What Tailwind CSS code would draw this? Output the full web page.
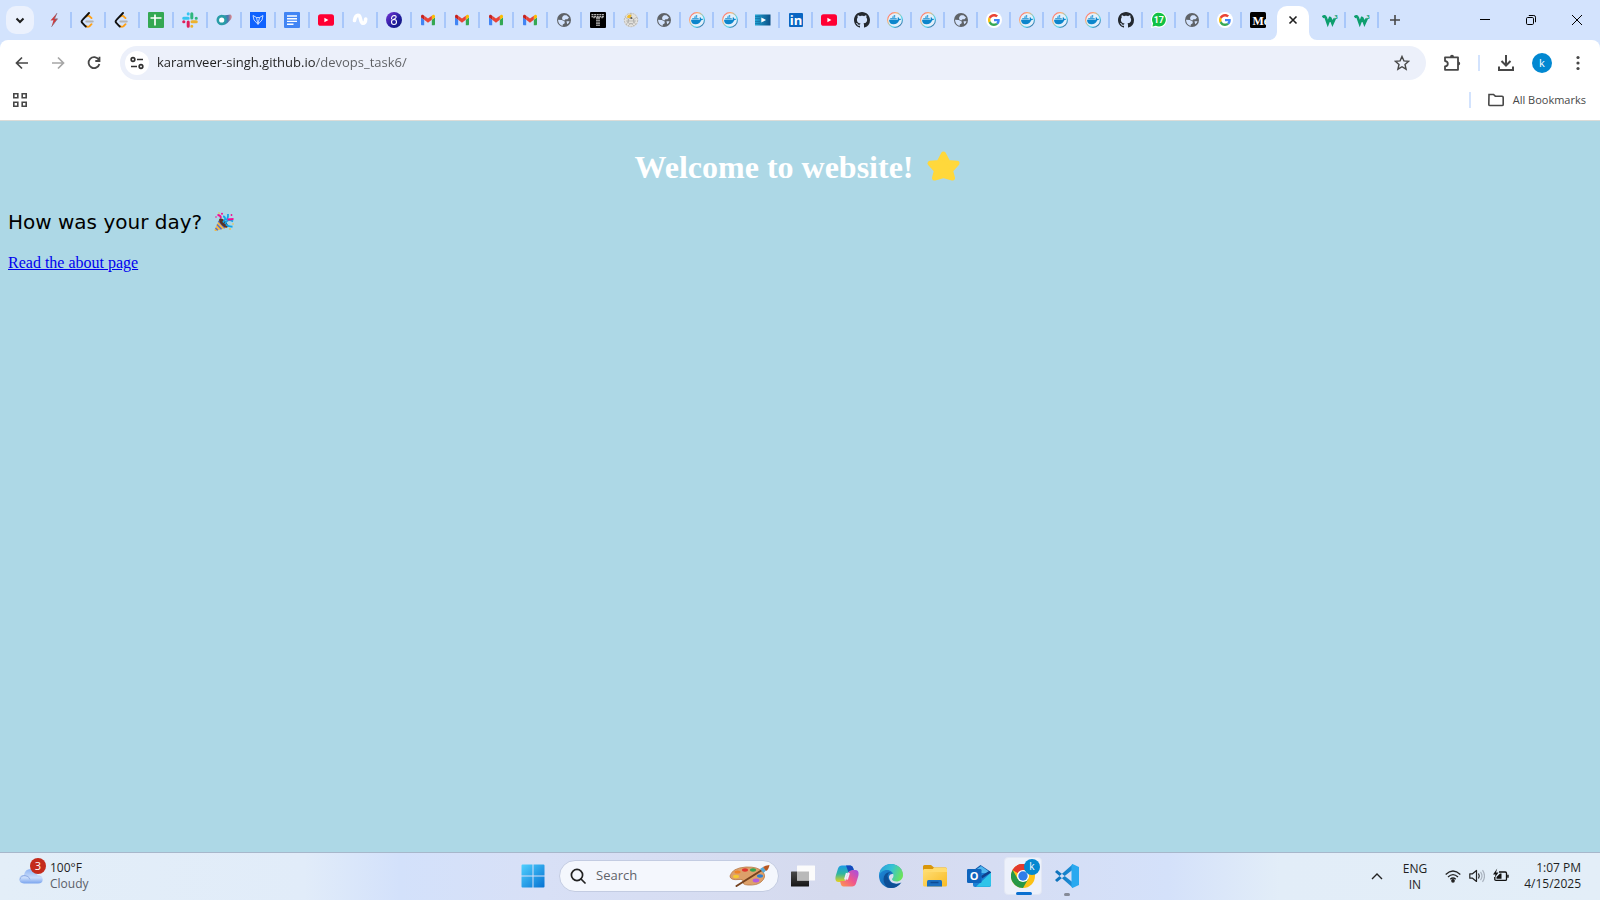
<!DOCTYPE html>
<html lang="en">
<head>
<meta charset="utf-8">
<title>karamveer-singh.github.io/devops_task6/</title>
<script src="https://cdn.jsdelivr.net/npm/@tailwindcss/browser@4"></script>
</head>
<body class="flex min-h-screen flex-col bg-[#add8e6] font-['Open_Sans',sans-serif] text-[#1f1f1f]">

<svg class="absolute size-0" aria-hidden="true">
  <defs>
    <linearGradient id="dockRing" x1="0" y1="0" x2="1" y2="1"><stop offset="0" stop-color="#ff4f6d"/><stop offset=".3" stop-color="#ffb070"/><stop offset=".65" stop-color="#49d9f0"/><stop offset="1" stop-color="#2a3a80"/></linearGradient>
    <linearGradient id="violet" x1="0" y1="0" x2="1" y2="1"><stop offset="0" stop-color="#7a35d8"/><stop offset=".6" stop-color="#1f1c9c"/><stop offset="1" stop-color="#101a78"/></linearGradient>
    <linearGradient id="blob" x1="0" x2="1"><stop offset="0" stop-color="#2ba3a8"/><stop offset=".6" stop-color="#4876b0"/><stop offset="1" stop-color="#f08a8a"/></linearGradient>
    <linearGradient id="prime" x1="0" x2="1"><stop offset="0" stop-color="#22a5d4"/><stop offset="1" stop-color="#0b4f86"/></linearGradient>
    <linearGradient id="win" x1="0" y1="0" x2="1" y2="1"><stop offset="0" stop-color="#4fd0ff"/><stop offset="1" stop-color="#0672d2"/></linearGradient>
    <linearGradient id="cloud" x1="0" y1="0" x2="0" y2="1"><stop offset="0" stop-color="#8fb4f2"/><stop offset=".6" stop-color="#c9dcfb"/><stop offset="1" stop-color="#79a4ee"/></linearGradient>
    <linearGradient id="tvDark" x1="0" y1="0" x2="0" y2="1"><stop offset="0" stop-color="#4a4a4a"/><stop offset="1" stop-color="#151515"/></linearGradient>
    <linearGradient id="cpA" x1="0" y1="0" x2="0" y2="1"><stop offset="0" stop-color="#1b9be8"/><stop offset=".5" stop-color="#2fb6a0"/><stop offset="1" stop-color="#e8d21c"/></linearGradient>
    <linearGradient id="cpB" x1="1" y1="0" x2="0" y2="1"><stop offset="0" stop-color="#a04ee8"/><stop offset=".5" stop-color="#f0568c"/><stop offset="1" stop-color="#ff9a4a"/></linearGradient>
    <linearGradient id="edTop" x1="0" y1=".2" x2="1" y2=".5"><stop offset="0" stop-color="#2a9fdc"/><stop offset=".5" stop-color="#36c3d4"/><stop offset="1" stop-color="#6be35c"/></linearGradient>
    <linearGradient id="edBody" x1="0" y1="0" x2="1" y2="1"><stop offset="0" stop-color="#1f8fe0"/><stop offset="1" stop-color="#10549c"/></linearGradient>
    <linearGradient id="fold" x1="0" y1="0" x2="1" y2="1"><stop offset="0" stop-color="#ffdf78"/><stop offset="1" stop-color="#f9bb23"/></linearGradient>
    <linearGradient id="vs" x1="0" x2="1"><stop offset="0" stop-color="#0b6fb8"/><stop offset="1" stop-color="#1f8fd8"/></linearGradient>
  </defs>
  <symbol id="bolt" viewBox="0 0 16 16"><path d="M11 1 4.500 8.500 7.500 8.200 5.500 14.800 11.500 6.800 8.400 7z" fill="#d0393b"/><path d="M11 1 8.400 7 11.500 6.800 5.500 14.800" fill="none" stroke="#7a6a78" stroke-width=".7"/></symbol>
  <symbol id="leet" viewBox="0 0 16 16"><path d="M6.500 4.500q1.500-1.200 3-.2l2 1.800M6 14q1.700 1.500 3.500.2l2-2" fill="none" stroke="#ffa116" stroke-width="1.900" stroke-linecap="round"/><path d="M9 1 2.500 7.800q-1.700 1.700 0 3.400l3.300 3.400" fill="none" stroke="#111" stroke-width="1.900" stroke-linecap="round"/><path d="M6.300 9.500h6.500" stroke="#b3b3b3" stroke-width="1.900" stroke-linecap="round"/></symbol>
  <symbol id="sheet" viewBox="0 0 16 16"><rect width="16" height="16" rx="1" fill="#34a853"/><path d="M2.500 6h11M7 2.500v11" stroke="#fff" stroke-width="1.700"/></symbol>
  <symbol id="slack" viewBox="0 0 16 16"><g fill="none" stroke-width="3" stroke-linecap="round"><path d="M1.700 6.200h4.500M6.200 1.700v.2" stroke="#36c5f0"/><path d="M9.800 1.700v4.300M14.200 6.200h.1" stroke="#2eb67d"/><path d="M14.300 9.800H10M9.800 14.200v.1" stroke="#ecb22e"/><path d="M6.200 14.300V10M1.700 9.800h.2" stroke="#e01e5a"/></g></symbol>
  <symbol id="rings" viewBox="0 0 16 16"><path d="M6 3q3 .5 8.500-.5 2.500 1.500.3 5Q12 11 8.500 13z" fill="url(#blob)"/><circle cx="5.700" cy="8" r="3.900" fill="#fff" stroke="#2a9da8" stroke-width="2.600"/></symbol>
  <symbol id="fox" viewBox="0 0 16 16"><rect width="16" height="16" fill="#0f62fe"/><path d="M3 3.500 6.500 5.500h3L13 3.500 12 8 8 12.300 4 8zM6.500 5.500 8 12.300 9.500 5.500" fill="none" stroke="#d8e6ff" stroke-width=".9"/></symbol>
  <symbol id="doc" viewBox="0 0 16 16"><rect width="16" height="16" rx="1" fill="#4285f4"/><path d="M3 4h10M3 6.700h10M3 9.400h10M3 12.200h6.500" stroke="#fff" stroke-width="1.400"/></symbol>
  <symbol id="yt" viewBox="0 0 16 16"><rect y="2.300" width="16" height="11.500" rx="2.600" fill="#ff0033"/><path d="M6.400 5.800v4.500L10.400 8z" fill="#fff"/></symbol>
  <symbol id="wave" viewBox="0 0 16 16"><path d="M2.500 8.500Q3.500 2.500 6.800 3.500C9 4.300 8 11 11 11.300q2.500 0 2.700-4.300" fill="none" stroke="#fff" stroke-width="3.600" stroke-linecap="round"/></symbol>
  <symbol id="eight" viewBox="0 0 16 16"><circle cx="8" cy="8" r="8" fill="url(#violet)"/><g fill="none" stroke="#fff" stroke-width="1.100"><circle cx="8" cy="10" r="2.500"/><path d="M5.500 7.300q0-3.800 3-3.800 2 .3 1.500 2-.5 1-3 2.300"/></g></symbol>
  <symbol id="gmail" viewBox="52 42 88 66"><path fill="#4285f4" d="M58 108h14V74L52 59v43c0 3.320 2.690 6 6 6"/><path fill="#34a853" d="M120 108h14c3.320 0 6-2.690 6-6V59l-20 15"/><path fill="#fbbc04" d="M120 48v26l20-15v-8c0-7.420-8.470-11.650-14.400-7.200"/><path fill="#ea4335" d="M72 74V48l24 18 24-18v26L96 92"/><path fill="#c5221f" d="M52 51v8l20 15V48l-5.600-4.200c-5.940-4.450-14.400-.22-14.400 7.200"/></symbol>
  <symbol id="globe" viewBox="0 0 16 16"><circle cx="8" cy="8" r="7" fill="#5f6368"/><path d="M6.800 4.200 8 3.200h2.500L13 5.500l-1.500 1.800H9.500L8.300 8.500 6.500 7.800 6 6zM2 7.800l3.800.1 2.900 1.600v1.800l-1.900 1.200L6.500 14Q2.300 12.500 2 7.800M10.500 9.300h3q-.5 2-2.300 3z" fill="#d3e3fd"/></symbol>
  <symbol id="tt" viewBox="0 0 16 16"><rect width="16" height="16" rx="1" fill="#000"/><path d="M1.500 2.800h13M1.500 4.800h13M4 6.300v-1M12 6.300v-1" stroke="#eee" stroke-width="1.100" stroke-dasharray="2 .6"/><path d="M7 5v9M9 5v9" stroke="#eee" stroke-width="1.200" stroke-dasharray="2 .6"/></symbol>
  <symbol id="ball" viewBox="0 0 16 16"><circle cx="8" cy="8" r="7.300" fill="#e3e1dc"/><g fill="none" stroke="#a5a5a3" stroke-width=".6"><circle cx="8" cy="8" r="6.700" stroke-dasharray="2 1"/><circle cx="8" cy="9" r="3"/><path d="m2 5 4 3-3 5M14 5l-4 3 3 5M5 14l3-3 3 3M8 1v6M3 9h10"/></g><path d="M4 4.500Q6 1.500 8.500 3l-1 3L4.500 6z" fill="#f3bd2a"/><circle cx="8.300" cy="6" r="1" fill="#555"/></symbol>
  <symbol id="docker" viewBox="0 0 16 16"><circle cx="8" cy="8" r="7.400" fill="#e3f0fc" stroke="url(#dockRing)" stroke-width="1.100"/><path d="M2 7.700h8.700q.3-.8-.2-1.900l.8-.6q1 .7 1 1.700 1.100-.2 1.900.2-.6 1.200-2 1.200Q10.700 12.200 6.500 12.200 2.200 12.200 2 7.700" fill="#0c86cc"/><path d="M3.200 5.900h6.500v1.500H3.200zM5 4.500h3.200v1.300H5zM6.700 3.100h1.500v1.300H6.700z" fill="#46a6dc"/></symbol>
  <symbol id="primevid" viewBox="0 0 16 16"><rect y="2.500" width="15.500" height="11" fill="url(#prime)"/><path d="M0 4.500h5M0 6.500h5M0 9.500h5M0 11.500h5" stroke="#126a9d" stroke-width=".6"/><path d="M6.300 5.500v5L11 8z" fill="#fff"/></symbol>
  <symbol id="linkedin" viewBox="0 0 16 16"><rect x="1" y="1" width="14" height="14" rx="1" fill="#0a66c2"/><text x="8" y="13" text-anchor="middle" font-family="Open Sans" font-weight="700" font-size="13" fill="#fff">in</text></symbol>
  <symbol id="github" viewBox="0 0 16 16"><path fill="#24292f" d="M8 0C3.580 0 0 3.580 0 8c0 3.540 2.290 6.530 5.470 7.590.4.070.55-.17.55-.38 0-.19-.01-.82-.01-1.490-2.010.37-2.530-.49-2.690-.94-.09-.23-.48-.94-.82-1.130-.28-.15-.68-.52-.01-.53.63-.01 1.080.58 1.230.82.72 1.210 1.870.87 2.330.66.07-.52.28-.87.51-1.070-1.780-.2-3.640-.89-3.640-3.950 0-.87.31-1.590.82-2.150-.08-.2-.36-1.020.08-2.120 0 0 .67-.21 2.200.82.64-.18 1.320-.27 2-.27s1.360.09 2 .27c1.530-1.040 2.200-.82 2.200-.82.44 1.100.16 1.920.08 2.120.51.56.82 1.270.82 2.150 0 3.070-1.870 3.750-3.650 3.950.29.25.54.73.54 1.480 0 1.070-.01 1.930-.01 2.200 0 .21.15.46.55.38A8.010 8.010 0 0 0 16 8c0-4.420-3.580-8-8-8"/></symbol>
  <symbol id="google" viewBox="0 0 16 16"><circle cx="8" cy="8" r="8" fill="#fff"/><g transform="translate(2 2) scale(.25)"><path fill="#EA4335" d="M24 9.500c3.540 0 6.710 1.220 9.210 3.600l6.850-6.850C35.900 2.380 30.470 0 24 0 14.620 0 6.510 5.380 2.560 13.220l7.980 6.190C12.430 13.720 17.740 9.500 24 9.500z"/><path fill="#4285F4" d="M46.980 24.550c0-1.570-.15-3.090-.38-4.550H24v9.020h12.940c-.58 2.960-2.260 5.480-4.780 7.180l7.730 6c4.510-4.180 7.090-10.360 7.090-17.650z"/><path fill="#FBBC05" d="M10.530 28.590c-.48-1.450-.76-2.990-.76-4.590s.27-3.140.76-4.590l-7.980-6.190C.92 16.460 0 20.120 0 24s.92 7.540 2.560 10.780l7.970-6.190z"/><path fill="#34A853" d="M24 48c6.480 0 11.930-2.130 15.890-5.810l-7.730-6c-2.150 1.450-4.920 2.300-8.160 2.300-6.260 0-11.570-4.220-13.470-9.910l-7.980 6.190C6.510 42.620 14.620 48 24 48z"/></g></symbol>
  <symbol id="whats" viewBox="0 0 16 16"><path d="M0 16 .8 11.500A8 8 0 1 1 4.500 15z" fill="#fff"/><path d="M1.500 14.500l.6-3.200A6.900 6.900 0 1 1 4.900 13.800z" fill="#12c143"/><text x="7.800" y="11.200" text-anchor="middle" font-family="Roboto" font-weight="700" font-size="9" fill="#fff">17</text></symbol>
  <symbol id="medium" viewBox="0 0 16 16"><rect width="16" height="16" rx="1.500" fill="#000"/><text x="2.500" y="12.500" font-family="Liberation Serif" font-weight="700" font-size="12" fill="#fff">Me</text></symbol>
  <symbol id="w3" viewBox="0 0 16 16"><path d="M.5 5.200Q3 3.300 3.800 5.800L5.800 11.500 8 5.800Q8.500 5.800 9 7.500L10.500 11.500 12.800 6.500" fill="none" stroke="#0d9e6e" stroke-width="2.600"/><text x="12.300" y="6.500" font-family="Roboto" font-weight="700" font-size="6" fill="#0d9e6e">3</text></symbol>
</svg>

<header class="bg-[#d3e3fd]">
  <div class="flex h-10 items-center">
    <button aria-label="Search tabs" class="ml-1.5 mr-1 flex size-7 items-center justify-center rounded-[10px] bg-[#ebf1fd]"><svg class="size-4" viewBox="0 0 16 16" fill="none" stroke="#1f1f1f" stroke-width="2"><path d="m4.500 6.500 3.500 3.500 3.500-3.500"/></svg></button>
    <nav aria-label="Tabs" class="flex h-4 items-center *:flex *:h-4 *:shrink-0 *:items-center *:justify-center [&_svg]:size-4">
      <button aria-label="Tab" class="w-[34px] border-r-2 border-[#a8c7fa]"><svg><use href="#bolt"/></svg></button>
      <button aria-label="LeetCode" class="w-[34px] border-r-2 border-[#a8c7fa]"><svg><use href="#leet"/></svg></button>
      <button aria-label="LeetCode" class="w-[34px] border-r-2 border-[#a8c7fa]"><svg><use href="#leet"/></svg></button>
      <button aria-label="Sheets" class="w-[34px] border-r-2 border-[#a8c7fa]"><svg><use href="#sheet"/></svg></button>
      <button aria-label="Slack" class="w-[34px] border-r-2 border-[#a8c7fa]"><svg><use href="#slack"/></svg></button>
      <button aria-label="Tab" class="w-[34px] border-r-2 border-[#a8c7fa]"><svg><use href="#rings"/></svg></button>
      <button aria-label="Tab" class="w-[34px] border-r-2 border-[#a8c7fa]"><svg><use href="#fox"/></svg></button>
      <button aria-label="Docs" class="w-[34px] border-r-2 border-[#a8c7fa]"><svg><use href="#doc"/></svg></button>
      <button aria-label="YouTube" class="w-[34px] border-r-2 border-[#a8c7fa]"><svg><use href="#yt"/></svg></button>
      <button aria-label="Tab" class="w-[34px] border-r-2 border-[#a8c7fa]"><svg><use href="#wave"/></svg></button>
      <button aria-label="Tab" class="w-[34px] border-r-2 border-[#a8c7fa]"><svg><use href="#eight"/></svg></button>
      <button aria-label="Gmail" class="w-[34px] border-r-2 border-[#a8c7fa]"><svg class="p-px"><use href="#gmail"/></svg></button>
      <button aria-label="Gmail" class="w-[34px] border-r-2 border-[#a8c7fa]"><svg class="p-px"><use href="#gmail"/></svg></button>
      <button aria-label="Gmail" class="w-[34px] border-r-2 border-[#a8c7fa]"><svg class="p-px"><use href="#gmail"/></svg></button>
      <button aria-label="Gmail" class="w-[34px] border-r-2 border-[#a8c7fa]"><svg class="p-px"><use href="#gmail"/></svg></button>
      <button aria-label="Tab" class="w-[34px] border-r-2 border-[#a8c7fa]"><svg><use href="#globe"/></svg></button>
      <button aria-label="Tab" class="w-[33px] border-r-2 border-[#a8c7fa]"><svg><use href="#tt"/></svg></button>
      <button aria-label="Tab" class="w-[33px] border-r-2 border-[#a8c7fa]"><svg><use href="#ball"/></svg></button>
      <button aria-label="Tab" class="w-[33px] border-r-2 border-[#a8c7fa]"><svg><use href="#globe"/></svg></button>
      <button aria-label="Docker" class="w-[33px] border-r-2 border-[#a8c7fa]"><svg><use href="#docker"/></svg></button>
      <button aria-label="Docker" class="w-[33px] border-r-2 border-[#a8c7fa]"><svg><use href="#docker"/></svg></button>
      <button aria-label="Video" class="w-[33px] border-r-2 border-[#a8c7fa]"><svg><use href="#primevid"/></svg></button>
      <button aria-label="LinkedIn" class="w-[33px] border-r-2 border-[#a8c7fa]"><svg><use href="#linkedin"/></svg></button>
      <button aria-label="YouTube" class="w-[33px] border-r-2 border-[#a8c7fa]"><svg><use href="#yt"/></svg></button>
      <button aria-label="GitHub" class="w-[33px] border-r-2 border-[#a8c7fa]"><svg><use href="#github"/></svg></button>
      <button aria-label="Docker" class="w-[33px] border-r-2 border-[#a8c7fa]"><svg><use href="#docker"/></svg></button>
      <button aria-label="Docker" class="w-[33px] border-r-2 border-[#a8c7fa]"><svg><use href="#docker"/></svg></button>
      <button aria-label="Tab" class="w-[33px] border-r-2 border-[#a8c7fa]"><svg><use href="#globe"/></svg></button>
      <button aria-label="Google" class="w-[33px] border-r-2 border-[#a8c7fa]"><svg><use href="#google"/></svg></button>
      <button aria-label="Docker" class="w-[33px] border-r-2 border-[#a8c7fa]"><svg><use href="#docker"/></svg></button>
      <button aria-label="Docker" class="w-[33px] border-r-2 border-[#a8c7fa]"><svg><use href="#docker"/></svg></button>
      <button aria-label="Docker" class="w-[33px] border-r-2 border-[#a8c7fa]"><svg><use href="#docker"/></svg></button>
      <button aria-label="GitHub" class="w-[33px] border-r-2 border-[#a8c7fa]"><svg><use href="#github"/></svg></button>
      <button aria-label="WhatsApp" class="w-[33px] border-r-2 border-[#a8c7fa]"><svg><use href="#whats"/></svg></button>
      <button aria-label="Tab" class="w-[33px] border-r-2 border-[#a8c7fa]"><svg><use href="#globe"/></svg></button>
      <button aria-label="Google" class="w-[33px] border-r-2 border-[#a8c7fa]"><svg><use href="#google"/></svg></button>
      <button aria-label="Tab" class="w-[31px]"><svg><use href="#medium"/></svg></button>
    </nav>
    <div class="-ml-1 flex h-[34px] shrink-0 items-end self-end">
      <svg class="size-2" viewBox="0 0 8 8"><path d="M8 0v8H0a8 8 0 0 0 8-8" fill="#fff"/></svg>
      <button aria-label="Close tab" class="flex h-[34px] w-8 items-center justify-center rounded-t-[10px] bg-white pb-1.5"><svg class="size-4" viewBox="0 0 16 16" stroke="#1f1f1f" stroke-width="1.600"><path d="m4.500 4.500 7 7m0-7-7 7"/></svg></button>
      <svg class="size-2" viewBox="0 0 8 8"><path d="M0 0v8h8a8 8 0 0 1-8-8" fill="#fff"/></svg>
    </div>
    <div class="flex h-4 shrink-0 items-center *:flex *:h-4 *:items-center *:justify-center [&_svg]:size-4">
      <button aria-label="W3Schools" class="w-[29px] border-r-2 border-[#a8c7fa] pr-0.5"><svg><use href="#w3"/></svg></button>
      <button aria-label="W3Schools" class="w-[33px] border-r-2 border-[#a8c7fa]"><svg><use href="#w3"/></svg></button>
      <button aria-label="New tab" class="w-8"><svg viewBox="0 0 16 16" stroke="#474747" stroke-width="1.600"><path d="M8 3v10M3 8h10"/></svg></button>
    </div>
    <div class="ml-auto flex shrink-0 [&_svg]:size-3 *:flex *:h-10 *:w-[46px] *:items-center *:justify-center">
      <button aria-label="Minimize"><svg viewBox="0 0 12 12" stroke="#000"><path d="M1 5.500h10"/></svg></button>
      <button aria-label="Restore"><svg viewBox="0 0 12 12" fill="none" stroke="#000"><rect x="1.500" y="3.500" width="7" height="7" rx="1.200"/><path d="M3.800 1.500h5q1.700 0 1.700 1.700v5"/></svg></button>
      <button aria-label="Close"><svg viewBox="0 0 12 12" stroke="#000"><path d="m1 1 10 10M11 1 1 11"/></svg></button>
    </div>
  </div>

  <div class="rounded-t-lg border-b border-[#dcdcd8] bg-white">
    <div class="flex h-[46px] items-center pl-1 pr-1">
      <button aria-label="Back" class="flex size-9 items-center justify-center"><svg class="size-4" viewBox="0 0 16 16" fill="none" stroke="#474747" stroke-width="1.700"><path d="M14 8H3M8 2.500 2.500 8 8 13.500"/></svg></button>
      <button aria-label="Forward" class="flex size-9 items-center justify-center"><svg class="size-4" viewBox="0 0 16 16" fill="none" stroke="#a6a6a6" stroke-width="1.700"><path d="M2 8h11M8 2.500 13.500 8 8 13.500"/></svg></button>
      <button aria-label="Reload" class="flex size-9 items-center justify-center"><svg class="size-4" viewBox="0 0 16 16" fill="none" stroke="#474747" stroke-width="1.800"><path d="M12.800 4.800A5.500 5.500 0 1 0 13.400 9M13.500 1.800V6H9.300"/></svg></button>
      <div class="ml-2 mr-2 flex h-[34px] flex-1 items-center rounded-full bg-[#ecf0fa] px-[5px]">
        <button aria-label="Site information" class="mr-2 flex size-6 items-center justify-center rounded-full bg-white"><svg class="size-4" viewBox="0 0 16 16" fill="none" stroke="#303030" stroke-width="1.700"><circle cx="4" cy="4.500" r="1.800"/><path d="M8 4.500h6M2 11.500h6"/><circle cx="12" cy="11.500" r="1.800"/></svg></button>
        <input aria-label="Address" value="karamveer-singh.github.io/devops_task6/" class="min-w-0 flex-1 bg-[linear-gradient(90deg,#1f1f1f_158px,#5c5e62_158px)] bg-clip-text text-[13px] text-transparent outline-none">
        <button aria-label="Bookmark this tab" class="mr-[7px] flex size-6 items-center justify-center"><svg class="size-4" viewBox="0 0 16 16" fill="none" stroke="#474747" stroke-width="1.400"><path d="m8 1.500 1.900 4.400 4.800.4-3.700 3.200 1.100 4.700L8 11.700l-4.100 2.500L5 9.500 1.300 6.300l4.800-.4z"/></svg></button>
      </div>
      <button aria-label="Extensions" class="flex size-9 items-center justify-center"><svg class="size-5" viewBox="0 0 20 20" fill="none" stroke="#474747" stroke-width="1.800"><path d="M3 4.300h13v12.500H3v-3.500q2.800-.3 2.800-2.600T3 8z" stroke-linejoin="round"/><path d="M8 4q0-2.200 2-2.200T12 4M16 8.500q2.200 0 2.200 2t-2.200 2" fill="#474747" stroke="none"/></svg></button>
      <span class="mx-2 h-4 w-0.5 bg-[#d3e3fd]"></span>
      <button aria-label="Downloads" class="flex size-9 items-center justify-center"><svg class="size-[18px]" viewBox="0 0 18 18" fill="none" stroke="#474747" stroke-width="2"><path d="M9 1v10M4.500 7 9 11.500 13.500 7M2 12.500V16h14v-3.500"/></svg></button>
      <button aria-label="Profile" class="flex size-9 items-center justify-center"><span class="flex size-5 items-center justify-center rounded-full bg-[#0288d1] text-[11px] text-white">k</span></button>
      <button aria-label="Menu" class="flex size-9 items-center justify-center"><svg class="size-4" viewBox="0 0 16 16" fill="#474747"><circle cx="8" cy="2.500" r="1.600"/><circle cx="8" cy="8" r="1.600"/><circle cx="8" cy="13.500" r="1.600"/></svg></button>
    </div>
    <div class="flex h-[34px] items-center justify-between pb-1.5 pl-3 pr-[14px]">
      <button aria-label="Apps"><svg class="size-4" viewBox="0 0 16 16" fill="none" stroke="#474747" stroke-width="1.600"><path d="M1.800 1.800h4v4h-4zM10.200 1.800h4v4h-4zM1.800 10.200h4v4h-4zM10.200 10.200h4v4h-4z"/></svg></button>
      <div class="flex items-center"><span class="mr-4 h-4 w-0.5 bg-[#d3e3fd]"></span>
        <button class="flex items-center gap-2 text-[11px] text-[#474747]"><svg class="h-4 w-[18px]" viewBox="0 0 18 16" fill="none" stroke="#474747" stroke-width="1.600"><path d="M2 2.500h4.500l1.800 1.700H15q1.200 0 1.200 1.200v7q0 1.100-1.200 1.100H3q-1.200 0-1.200-1.100z"/></svg>All Bookmarks</button></div>
    </div>
  </div>
</header>

<main class="flex-1 px-2 pt-[26px] text-black">
  <h1 class="flex items-center justify-center gap-2 font-['Liberation_Serif',serif] text-[32px] font-bold leading-10 text-white">Welcome to website!
    <svg role="img" aria-label="star" class="h-10 w-11" viewBox="0 0 44 40"><path d="M21.500 7 26 15.500 35 16.300 28.500 23.500 30.500 31 21.500 28.500 12.500 31 14.500 23.500 8 16.300 17 15.500z" fill="#ffd83b" stroke="#ffd83b" stroke-width="5" stroke-linejoin="round"/></svg>
  </h1>
  <p class="mt-[21px] flex items-center gap-[11px] font-['DejaVu_Sans',sans-serif] text-xl leading-7">How was your day?
    <svg role="img" aria-label="party popper" class="h-5 w-6" viewBox="0 0 24 20"><path d="m6.500 7 8 8.500L2.500 19q-1.300.2-1-1.200z" fill="#f5b942"/><path d="m5.300 9 6.500 7M4 12.500 8.500 17.300M2.500 16l2.300 2.300" stroke="#4f6fd8" stroke-width="1.400"/><ellipse cx="10.500" cy="11" rx="2.700" ry="5.800" transform="rotate(-43 10.500 11)" fill="#5a3326"/><path d="m10 10.500 2-3q.5-3-2-3M11.500 7.500q4 1 3.500-5.500M12 12q3-6.500 8-2.500M13 12.500q3 2.500 6.500 2" fill="none" stroke="#10a5ea" stroke-width="1.800"/><path d="M14.500 7.500q3.500-.5 6-.5M4.500 3q3 0 3.500 3" fill="none" stroke="#f50a93" stroke-width="1.800"/><g fill="#f50a93"><circle cx="9" cy="1.800" r="1"/><circle cx="3" cy="5" r=".8"/><circle cx="18.500" cy="3" r=".9"/></g><g fill="#f8c13a"><circle cx="6" cy="1" r=".8"/><circle cx="17" cy="17" r=".9"/><circle cx="20" cy="12" r=".8"/></g></svg>
  </p>
  <div class="mt-[15px] font-['Liberation_Serif',serif] text-base leading-6"><a href="#about" class="text-[#0000ee] underline">Read the about page</a></div>
</main>

<footer class="grid h-12 grid-cols-[1fr_auto_1fr] border-t border-[#a7b7cb] bg-[linear-gradient(90deg,#e3eef8_0%,#e1ecf9_19%,#d3e1fb_25%,#d8e0f6_34%,#d5daee_52%,#d6ddf3_62%,#d4e1fa_73%,#e2edf8_80%,#e3eef8_100%)] pb-0.5">
  <button class="relative flex items-center gap-[7px] justify-self-start pl-[19px] text-left text-xs leading-4">
    <svg class="h-4 w-6" viewBox="0 0 24 16"><path d="M5 15.500Q.3 15.200.3 11T5 7Q6 1 11.500 1T18.500 7.200q5.200 0 5.200 4.300 0 4-4.700 4z" fill="url(#cloud)"/><path d="M1 11.500Q2 7.200 6 7.500t5 4" fill="none" stroke="#7e9edc" stroke-width=".7"/></svg>
    <span class="absolute left-[30px] top-[5px] flex size-4 items-center justify-center rounded-full bg-[#c42b1c] text-[11px] text-white">3</span>
    <span><span class="block">100°F</span><span class="block text-[#5b6068]">Cloudy</span></span>
  </button>
  <div class="flex items-center">
    <button aria-label="Start" class="flex h-10 w-11 items-center justify-center"><svg class="size-6" viewBox="0 0 24 24" fill="url(#win)"><path d="M1.500.5H11.500V11.500H.5V1.500q0-1 1-1M12.500.5h10q1 0 1 1v10h-11zM.5 12.500h11v11h-10q-1 0-1-1zM12.500 12.500h11v10q0 1-1 1h-10z"/></svg></button>
    <label class="ml-1 mr-0.5 flex h-8 w-[220px] items-center rounded-full border border-[#c3cce2] bg-[#f4f7fd] pl-2.5 pr-2">
      <svg class="size-4" viewBox="0 0 16 16" fill="none" stroke="#222" stroke-width="1.700"><circle cx="7" cy="7" r="5.600"/><path d="m11 11 4 4" stroke-linecap="round"/></svg>
      <input aria-label="Search" placeholder="Search" class="ml-2.5 min-w-0 flex-1 text-[13px] outline-none placeholder:text-[#5f6369]">
      <svg class="h-[22px] w-[41px]" viewBox="0 0 41 22"><path d="M1 11Q3 3 17 2q12-.5 17 5 4 5-2 10-4 3.500-13 3-6-.3-5-3.500.3-2.500-4-2-9 1-9-3.500" fill="#dda06a" stroke="#b97a45" stroke-width=".8"/><ellipse cx="7" cy="11.500" rx="3" ry="1.700" fill="#f6c931"/><ellipse cx="8.500" cy="7" rx="3" ry="1.500" fill="#f08326"/><ellipse cx="16" cy="5" rx="3" ry="1.700" fill="#e0352f"/><ellipse cx="24" cy="5" rx="3" ry="1.700" fill="#31a552"/><ellipse cx="31" cy="11" rx="3" ry="1.700" fill="#2d7fd2"/><ellipse cx="27" cy="15.500" rx="3.300" ry="1.900" fill="#b35be0"/><path d="M7.500 21 33 5" stroke="#75421f" stroke-width="2" stroke-linecap="round"/><path d="m31 4 3.500 4L37 5.500 34 2z" fill="#58abd8"/><path d="M34 2q2-1.500 6.500-2-1 5-3.500 6z" fill="#b85822"/></svg>
    </label>
    <button aria-label="Task view" class="flex h-10 w-11 items-center justify-center"><svg class="size-6" viewBox="0 0 24 24"><rect y="7.500" width="18" height="15" rx=".6" fill="url(#tvDark)"/><rect x="6" y="1.500" width="18" height="15" rx=".6" fill="#fbfbfb"/><path d="M6 7.500h12v9H6z" fill="#b9b9b9"/></svg></button>
    <button aria-label="Copilot" class="flex h-10 w-11 items-center justify-center"><svg class="size-6" viewBox="0 0 24 24"><path d="M7 1.500h8.500q2 0 2.700 2.500l.8 3h-4q-2 0-2.500 2l-2 6.500Q9.500 18 7 18H3.500Q-.5 18 .7 12L3 4.500Q4 1.500 7 1.500" fill="url(#cpA)"/><path d="M17 22.500H8.500q-2 0-2.700-2.500L5 17h4q2 0 2.500-2l2-6.500Q14.500 6 17 6h3.500q4 0 2.800 6L21 19.500q-1 3-4 3" fill="url(#cpB)"/><path d="M11 1.500h4.500q2 0 2.700 2.500l.6 2H17q-2.500 0-3.500 2.500-1-3-2.500-7" fill="#1649bd"/><path d="m11.800 9-1.900 6.500M14 9l-2 6.500" stroke="#f2edf8" stroke-width="1.800"/></svg></button>
    <button aria-label="Edge" class="flex h-10 w-11 items-center justify-center"><svg class="size-6" viewBox="0 0 24 24"><circle cx="12" cy="12" r="12" fill="url(#edBody)"/><path d="M14 9.800q-4.500.5-4 4.200 1 5.500 7.500 5.800 3.500 0 5.500-1.800l1.500-3-1.500-9z" fill="#d8def0"/><path d="M0 11.500C.5 4.500 6 0 12 0c7 0 12 5 12 11 0 4-3 6.500-6.500 6.500-3 0-4.500-1.200-4.500-2.300 0-.8 1.500-1.300 1.500-3.700C14.500 8.500 11.500 6 8 6 4 6 1 8.500 0 11.500" fill="url(#edTop)"/><path d="M8.500 12q0-2.500 3-3.700Q7 8 5 12.500q-2 6 3.500 11L12 24q6 0 9.800-5-2.500 1.200-5.300 1Q9.500 19.500 8.500 12" fill="#0d4f96"/></svg></button>
    <button aria-label="File Explorer" class="flex h-10 w-11 items-center justify-center"><svg class="size-6" viewBox="0 0 24 24"><path d="M0 2.500Q0 1 1.500 1H8l3 2.500h11.500Q24 3.500 24 5v6H0z" fill="#d9960a"/><rect y="5" width="24" height="17.500" rx="1.500" fill="url(#fold)"/><path d="M0 6.500h8.500L11 3.500h11.500q1.500 0 1.500 1.500v3H0z" fill="#ffdc6e"/><path d="M4 22.500v-5Q4 16 5.500 16h12q1.500 0 1.500 1.500v5z" fill="#1a6fc0"/><path d="M7.500 18.500h8" stroke="#0c4b94" stroke-width="1.500"/></svg></button>
    <button aria-label="Outlook" class="flex h-10 w-11 items-center justify-center"><svg class="size-6" viewBox="0 0 24 24"><path d="M5 7.500 13.500 1 24 8v8H5z" fill="#0c55a8"/><path d="M7 7 14 2l8 5.500-8 6z" fill="#51b7f0"/><path d="M6 9h18v12q0 2-2 2H8q-2 0-2-2z" fill="#1a80d5"/><path d="M24 8.500 9 22.800h13q2 0 2-2z" fill="#2ec4e9"/><path d="m14 12 8-5 2 1.500-9 6z" fill="#103f8c"/><rect y="5" width="14.500" height="14" rx="1.300" fill="#0f64bd"/><text x="7.200" y="16" text-anchor="middle" font-family="Open Sans" font-weight="700" font-size="11" fill="#fff">O</text></svg></button>
    <button aria-label="Chrome" class="relative mx-[3px] flex h-[38px] w-[38px] items-center justify-center rounded border border-[#e2e7f4] bg-[#edf1fb]">
      <svg class="size-6" viewBox="0 0 24 24"><circle cx="12" cy="12" r="12" fill="#fbc116"/><path d="M12 12 1.600 6A12 12 0 0 1 22.400 6H12z" fill="#e33b2e"/><path d="M1.600 6A12 12 0 0 0 12 24l5.200-9L12 12 6.800 15z" fill="#279847"/><path d="M1.600 6 7 9l5-3V0A12 12 0 0 0 1.600 6" fill="#e33b2e"/><circle cx="12" cy="12" r="6" fill="#fff"/><circle cx="12" cy="12" r="4.700" fill="#2f7de9"/></svg>
      <span class="absolute right-px top-px flex size-4 items-center justify-center rounded-full bg-[#0288d1] text-[10px] text-white">k</span>
      <span class="absolute -bottom-px left-[11px] h-[3px] w-4 rounded-full bg-[#0a6fd0]"></span>
    </button>
    <button aria-label="Visual Studio Code" class="relative flex h-10 w-11 items-center justify-center"><svg class="size-6" viewBox="0 0 24 24"><path d="m0 8 2-2 16 12.500V24zM0 16l2 2L18 5.500V0z" fill="url(#vs)"/><path d="M17.500 0 24 3v18l-6.500 3-1-1V1z" fill="#29a9f0"/></svg><span class="absolute bottom-0 left-[19px] h-[3px] w-1.5 rounded-full bg-[#868b98]"></span></button>
  </div>
  <div class="flex items-center justify-self-end pr-[19px] text-xs leading-4">
    <button aria-label="Show hidden icons" class="mr-5"><svg class="h-4 w-3" viewBox="0 0 12 16" fill="none" stroke="#222" stroke-width="1.400"><path d="m1 11 5-5 5 5"/></svg></button>
    <button class="mr-[18px] pt-0.5 text-center">ENG<br>IN</button>
    <button aria-label="Network, volume and battery" class="mr-[15px] flex gap-2 *:size-4">
      <svg viewBox="0 0 16 16" fill="none" stroke="#222" stroke-width="1.300"><path d="M.7 6.500q7.300-7 14.600 0M3 9q5-4.800 10 0M5.300 11.300q2.700-2.500 5.400 0"/><circle cx="8" cy="12.800" r="1.200" fill="#222"/></svg>
      <svg viewBox="0 0 16 16" fill="none" stroke="#222" stroke-width="1.200"><path d="M.8 5.800h2.700L7.500 2.500v11L3.500 10.200H.8zM9.500 5.500q1.500 2.500 0 5" stroke-linejoin="round"/><path d="M11.500 3.800q3 4.200 0 8.400M13.500 2.200q4 5.800 0 11.600" stroke="#a9b2be"/></svg>
      <svg viewBox="0 0 16 16" fill="none" stroke="#111" stroke-width="1.300"><path d="M6 4h6.300q1.200 0 1.200 1.200v6q0 1.200-1.200 1.200H3q-1.200 0-1.200-1.200V9"/><path d="M3.500 10.800V9L7 5.500h1.500v5.300zM14.200 6.800h1.500v3h-1.500zM4.200.5 0 6.500h2.500L1.500 10 5.500 4.500H3z" fill="#111" stroke="none"/></svg>
    </button>
    <button class="text-right">1:07 PM<br>4/15/2025</button>
  </div>
</footer>
</body>
</html>
